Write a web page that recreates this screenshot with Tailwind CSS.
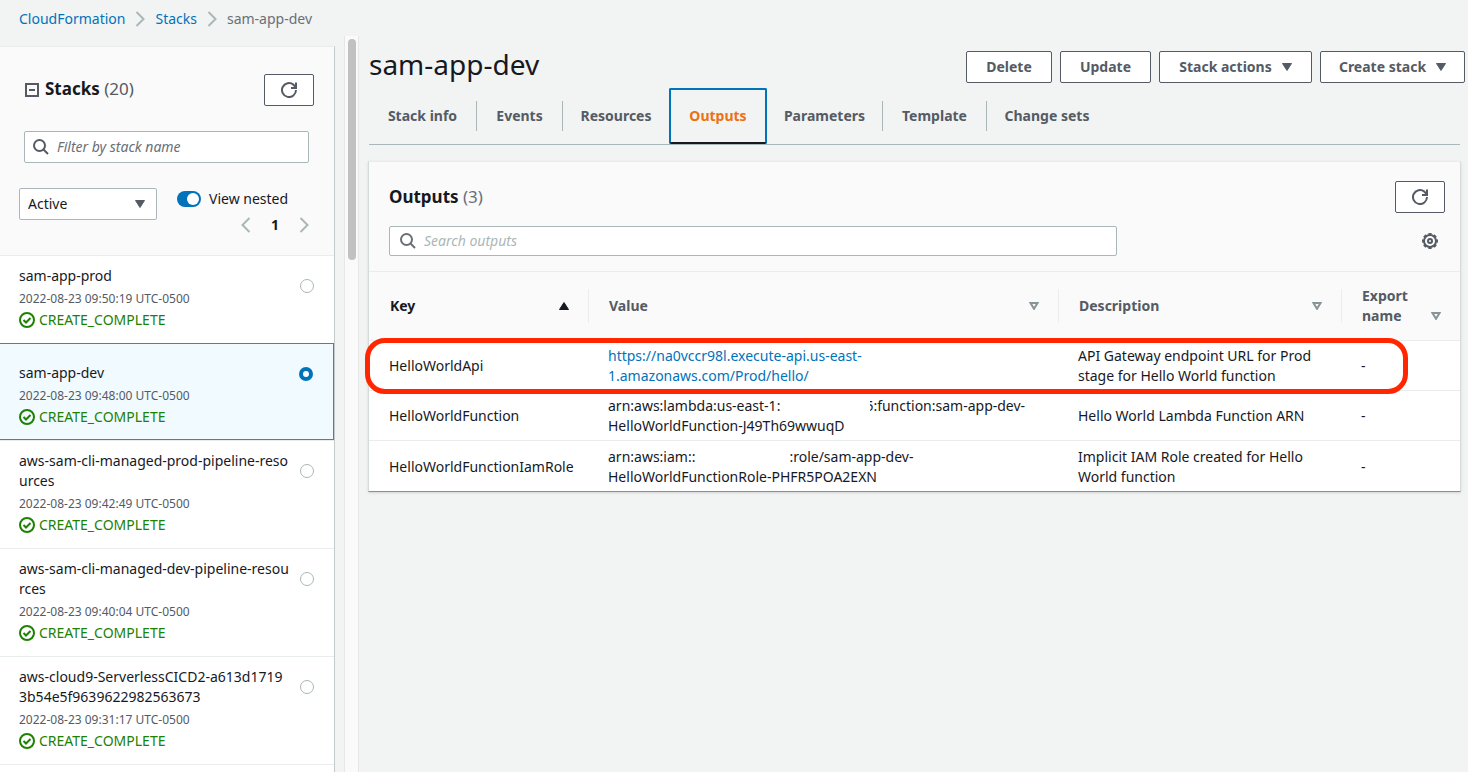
<!DOCTYPE html>
<html lang="en">
<head>
<meta charset="utf-8">
<title>CloudFormation - sam-app-dev</title>
<script src="https://cdn.jsdelivr.net/npm/@tailwindcss/browser@4"></script>
</head>
<body class="flex h-screen flex-col overflow-hidden bg-[#f2f3f3] font-['Noto_Sans','Open_Sans',sans-serif] text-sm leading-5 text-[#16191f]">
<svg class="hidden" aria-hidden="true">
  <symbol id="refresh" viewBox="0 0 16 16"><path d="M15 8a7 7 0 1 1-2.6-5.4L14.5 5M15 .5V6H10" fill="none" stroke="currentColor" stroke-width="2"/></symbol>
  <symbol id="search" viewBox="0 0 16 16"><circle cx="6.5" cy="6.5" r="5.5" fill="none" stroke="currentColor" stroke-width="2"/><path d="M10.5 10.5l4.500 4.500" stroke="currentColor" stroke-width="2"/></symbol>
  <symbol id="check" viewBox="0 0 16 16"><circle cx="8" cy="8" r="7" fill="none" stroke="currentColor" stroke-width="2"/><path d="M4.500 8l2.500 2.500L11.500 6" fill="none" stroke="currentColor" stroke-width="2"/></symbol>
  <symbol id="down" viewBox="0 0 10 8"><path d="M.5 .5h9L5 7.5z" fill="currentColor" stroke="currentColor" stroke-linejoin="round"/></symbol>
  <symbol id="sort" viewBox="0 0 10 8"><path d="M1.500 1h7L5 6.800z" fill="none" stroke="currentColor" stroke-width="2"/></symbol>
  <symbol id="next" viewBox="0 0 10 16"><path d="M1.500 1l7 7-7 7" fill="none" stroke="currentColor" stroke-width="2"/></symbol>
</svg>

<nav class="flex h-9 shrink-0 items-center gap-2.5 pt-0.5 pl-[19px]" aria-label="Breadcrumb">
  <a href="#" class="text-[#0073bb]">CloudFormation</a>
  <svg class="h-4 w-2.5 text-[#aab7b8]"><use href="#next"/></svg>
  <a href="#" class="text-[#0073bb]">Stacks</a>
  <svg class="h-4 w-2.5 text-[#aab7b8]"><use href="#next"/></svg>
  <span class="text-[#687078]">sam-app-dev</span>
</nav>

<div class="flex min-h-0 flex-1">
  <aside class="mt-2.5 w-[335px] shrink-0 overflow-hidden border-t border-r border-t-[#eaeded] border-r-[#c4cacb] bg-white">
    <div class="border-b border-[#eaeded] bg-[#fafafa] pt-[27px] pb-5">
      <div class="flex h-8 items-center justify-between pr-5 pl-[25px]">
        <div class="flex items-center gap-1.5">
          <button aria-label="Collapse stacks" class="flex size-3.5 items-center justify-center border-2 border-[#545b64]"><span class="h-0.5 w-1.5 bg-[#545b64]"></span></button>
          <h2 class="pb-0.5 text-[17px] leading-6 font-bold">Stacks <span class="font-normal text-[#545b64]">(20)</span></h2>
        </div>
        <button aria-label="Refresh stacks" class="flex h-8 w-[50px] items-center justify-center rounded-xs border border-[#545b64] bg-white text-[#545b64]"><svg class="size-4"><use href="#refresh"/></svg></button>
      </div>
      <label class="mt-[25px] mr-[25px] ml-6 flex h-8 items-center gap-2 rounded-xs border border-[#aab7b8] bg-white px-2">
        <svg class="size-4 shrink-0 text-[#545b64]"><use href="#search"/></svg>
        <input type="text" aria-label="Filter by stack name" placeholder="Filter by stack name" class="min-w-0 flex-1 italic outline-none placeholder:text-[#687078]">
      </label>
      <div class="mt-[25px] flex items-start pl-[19px]">
        <div class="relative">
          <select aria-label="Status" class="h-8 w-[138px] appearance-none rounded-xs border border-[#aab7b8] bg-white px-2"><option>Active</option></select>
          <svg class="pointer-events-none absolute top-3 right-3 h-2 w-2.5 text-[#545b64]"><use href="#down"/></svg>
        </div>
        <div class="ml-5 flex-1 pr-[25px]">
          <label class="flex h-[22px] items-center gap-2">
            <span class="relative flex h-4 w-6">
              <input type="checkbox" checked class="h-4 w-6 appearance-none rounded-full bg-[#0073bb]">
              <span class="pointer-events-none absolute top-0.5 right-0.5 size-3 rounded-full bg-white"></span>
            </span>
            View nested
          </label>
          <div class="mt-[5px] flex items-center justify-end gap-5 text-[#aab7b8]">
            <button aria-label="Previous page"><svg class="h-4 w-2.5 rotate-180"><use href="#next"/></svg></button>
            <button class="font-bold text-[#16191f]">1</button>
            <button aria-label="Next page"><svg class="h-4 w-2.5"><use href="#next"/></svg></button>
          </div>
        </div>
      </div>
    </div>

    <ul>
      <li class="border-b border-[#eaeded]">
        <label class="flex justify-between pt-2.5 pr-5 pb-[13px] pl-[19px]">
          <span class="block"><span class="block whitespace-nowrap">sam-app-prod</span>
            <span class="mt-[5px] block text-xs leading-4 text-[#545b64]">2022-08-23 09:50:19 UTC-0500</span>
            <span class="mt-[3px] flex items-center gap-1 text-[#1d8102]"><svg class="size-4"><use href="#check"/></svg>CREATE_COMPLETE</span></span>
          <input type="radio" name="stack" class="mt-[13px] size-3.5 appearance-none rounded-full border border-[#aab7b8] bg-white">
        </label>
      </li>
      <li class="-mt-px border-b border-[#eaeded]">
        <label class="flex justify-between border border-l-0 border-[#00a1c9] bg-[#f1faff] pt-[19px] pr-5 pb-3 pl-[19px]">
          <span class="block"><span class="block whitespace-nowrap">sam-app-dev</span>
            <span class="mt-[5px] block text-xs leading-4 text-[#545b64]">2022-08-23 09:48:00 UTC-0500</span>
            <span class="mt-[3px] flex items-center gap-1 text-[#1d8102]"><svg class="size-4"><use href="#check"/></svg>CREATE_COMPLETE</span></span>
          <input type="radio" name="stack" checked class="mt-1 size-3.5 appearance-none rounded-full border-4 border-[#0073bb] bg-white">
        </label>
      </li>
      <li class="border-b border-[#eaeded]">
        <label class="flex justify-between pt-2.5 pr-5 pb-[13px] pl-[19px]">
          <span class="block"><span class="block whitespace-nowrap">aws-sam-cli-managed-prod-pipeline-reso<br>urces</span>
            <span class="mt-[5px] block text-xs leading-4 text-[#545b64]">2022-08-23 09:42:49 UTC-0500</span>
            <span class="mt-[3px] flex items-center gap-1 text-[#1d8102]"><svg class="size-4"><use href="#check"/></svg>CREATE_COMPLETE</span></span>
          <input type="radio" name="stack" class="mt-[13px] size-3.5 appearance-none rounded-full border border-[#aab7b8] bg-white">
        </label>
      </li>
      <li class="border-b border-[#eaeded]">
        <label class="flex justify-between pt-2.5 pr-5 pb-[13px] pl-[19px]">
          <span class="block"><span class="block whitespace-nowrap">aws-sam-cli-managed-dev-pipeline-resou<br>rces</span>
            <span class="mt-[5px] block text-xs leading-4 text-[#545b64]">2022-08-23 09:40:04 UTC-0500</span>
            <span class="mt-[3px] flex items-center gap-1 text-[#1d8102]"><svg class="size-4"><use href="#check"/></svg>CREATE_COMPLETE</span></span>
          <input type="radio" name="stack" class="mt-[13px] size-3.5 appearance-none rounded-full border border-[#aab7b8] bg-white">
        </label>
      </li>
      <li class="border-b border-[#eaeded]">
        <label class="flex justify-between pt-2.5 pr-5 pb-[13px] pl-[19px]">
          <span class="block"><span class="block whitespace-nowrap">aws-cloud9-ServerlessCICD2-a613d1719<br>3b54e5f9639622982563673</span>
            <span class="mt-[5px] block text-xs leading-4 text-[#545b64]">2022-08-23 09:31:17 UTC-0500</span>
            <span class="mt-[3px] flex items-center gap-1 text-[#1d8102]"><svg class="size-4"><use href="#check"/></svg>CREATE_COMPLETE</span></span>
          <input type="radio" name="stack" class="mt-[13px] size-3.5 appearance-none rounded-full border border-[#aab7b8] bg-white">
        </label>
      </li>
    </ul>
  </aside>

  <div class="ml-[9px] w-[15px] shrink-0 border-x border-[#e7e7e7] bg-[#fafafa] px-[3px] pt-[3px]" aria-hidden="true">
    <div class="h-[221px] w-2 rounded-full bg-[#c1c1c1]"></div>
  </div>

  <main class="min-w-0 flex-1 pr-[3px] pl-2.5">
    <div class="flex items-start justify-between">
      <h1 class="mt-2.5 text-[28px] leading-9">sam-app-dev</h1>
      <div class="mt-[15px] flex gap-2 font-bold text-[#545b64]">
        <button class="h-8 w-[86px] rounded-xs border border-[#545b64] bg-white">Delete</button>
        <button class="h-8 w-[91px] rounded-xs border border-[#545b64] bg-white">Update</button>
        <button class="flex h-8 w-[153px] items-center justify-center gap-2.5 rounded-xs border border-[#545b64] bg-white">Stack actions <svg class="h-2 w-2.5"><use href="#down"/></svg></button>
        <button class="flex h-8 w-[145px] items-center justify-center gap-2.5 rounded-xs border border-[#545b64] bg-white">Create stack <svg class="h-2 w-2.5"><use href="#down"/></svg></button>
      </div>
    </div>

    <div role="tablist" class="mt-[5px] mr-[5px] flex h-[57px] items-center border-b border-[#aab7b8] font-bold text-[#545b64]">
      <button role="tab" class="h-[30px] w-[108px] border-r border-[#aab7b8]">Stack info</button>
      <button role="tab" class="h-[30px] w-[86px] border-r border-[#aab7b8]">Events</button>
      <button role="tab" class="h-[30px] w-[106px]">Resources</button>
      <button role="tab" aria-selected="true" class="h-14 w-[98px] rounded-xs border-2 border-[#0073bb] border-b-[#16191f] text-[#ec7211]">Outputs</button>
      <button role="tab" class="h-[30px] w-[116px] border-r border-[#aab7b8]">Parameters</button>
      <button role="tab" class="h-[30px] w-[104px] border-r border-[#aab7b8]">Template</button>
      <button role="tab" class="h-[30px] w-[120px]">Change sets</button>
    </div>

    <section class="mt-4 mr-1 -ml-px border border-[#d5dbdb] border-t-[#eaeded] border-b-[#879196] bg-white shadow-sm">
      <div class="flex flex-col border-b border-[#eaeded] bg-[#fafafa] pt-[19px] pr-[15px] pb-[15px] pl-5">
        <div class="flex items-center justify-between">
          <h2 class="text-[17px] leading-6 font-bold">Outputs <span class="font-normal text-[#687078]">(3)</span></h2>
          <button aria-label="Refresh outputs" class="flex h-8 w-[50px] items-center justify-center rounded-xs border border-[#545b64] bg-white text-[#545b64]"><svg class="size-4"><use href="#refresh"/></svg></button>
        </div>
        <div class="mt-[13px] flex items-center justify-between pr-[7px]">
          <label class="flex h-[30px] w-[728px] items-center gap-2 rounded-xs border border-[#aab7b8] bg-white px-2.5">
            <svg class="size-4 shrink-0 text-[#687078]"><use href="#search"/></svg>
            <input type="text" aria-label="Search outputs" placeholder="Search outputs" class="min-w-0 flex-1 italic outline-none placeholder:text-[#aab7b8]">
          </label>
          <button aria-label="Preferences" class="text-[#545b64]">
            <svg class="size-4" viewBox="0 0 16 16" fill="none" stroke="currentColor" stroke-width="2"><circle cx="8" cy="8" r="6"/><circle cx="8" cy="8" r="7" pathLength="16" stroke-dasharray="1.2 .8" stroke-dashoffset=".6"/><circle cx="8" cy="8" r="2"/></svg>
          </button>
        </div>
      </div>

      <div class="relative">
        <table class="w-full table-fixed border-collapse text-left">
          <colgroup><col class="w-[220px]"><col><col class="w-[283px]"><col class="w-[118px]"></colgroup>
          <thead>
            <tr class="h-[68px] border-b border-[#eaeded] bg-[#fafafa] text-[#545b64]">
              <th class="p-0 font-bold text-[#16191f]"><div class="flex h-[34px] items-center justify-between border-r border-[#eaeded] pr-[19px] pl-[21px]">Key <svg class="h-2 w-2.5 rotate-180"><use href="#down"/></svg></div></th>
              <th class="p-0 font-bold"><div class="flex h-[34px] items-center justify-between border-r border-[#eaeded] pr-[19px] pl-5">Value <svg class="h-2 w-2.5 text-[#879596]"><use href="#sort"/></svg></div></th>
              <th class="p-0 font-bold"><div class="flex h-[34px] items-center justify-between border-r border-[#eaeded] pr-[19px] pl-5">Description <svg class="h-2 w-2.5 text-[#879596]"><use href="#sort"/></svg></div></th>
              <th class="p-0 font-bold"><div class="flex items-end justify-between pr-[19px] pl-5"><span>Export<br>name</span> <svg class="mb-1.5 h-2 w-2.5 text-[#879596]"><use href="#sort"/></svg></div></th>
            </tr>
          </thead>
          <tbody>
            <tr class="h-[50px] border-b border-[#eaeded]">
              <td class="pt-0.5 pb-0 pl-5">HelloWorldApi</td>
              <td class="pt-0.5 pb-0 pl-[19px]"><a href="#" class="text-[#0073bb]">https://na0vccr98l.execute-api.us-east-<br>1.amazonaws.com/Prod/hello/</a></td>
              <td class="pt-0.5 pb-0 pl-[19px]">API Gateway endpoint URL for Prod<br>stage for Hello World function</td>
              <td class="pt-0.5 pb-0 pl-[19px]">-</td>
            </tr>
            <tr class="h-[50px] border-b border-[#eaeded]">
              <td class="pt-0.5 pb-0 pl-5">HelloWorldFunction</td>
              <td class="pt-0.5 pb-0 pl-[19px]">arn:aws:lambda:us-east-1:<span class="inline-block w-[90px]"></span><span class="inline-flex h-5 w-[3px] justify-end overflow-hidden align-bottom">5</span>:function:sam-app-dev-<br>HelloWorldFunction-J49Th69wwuqD</td>
              <td class="pt-0.5 pb-0 pl-[19px]">Hello World Lambda Function ARN</td>
              <td class="pt-0.5 pb-0 pl-[19px]">-</td>
            </tr>
            <tr class="h-[51px]">
              <td class="pt-0.5 pb-0 pl-5">HelloWorldFunctionIamRole</td>
              <td class="pt-0.5 pb-0 pl-[19px]">arn:aws:iam::<span class="inline-block w-[94px]"></span>:role/sam-app-dev-<br>HelloWorldFunctionRole-PHFR5POA2EXN</td>
              <td class="pt-0.5 pb-0 pl-[19px]">Implicit IAM Role created for Hello<br>World function</td>
              <td class="pt-0.5 pb-0 pl-[19px]">-</td>
            </tr>
          </tbody>
        </table>
        <div class="pointer-events-none absolute top-[66px] right-[52px] -left-1 h-14 rounded-[20px] border-5 border-[#ff2600]"></div>
      </div>
    </section>
  </main>
</div>
</body>
</html>
